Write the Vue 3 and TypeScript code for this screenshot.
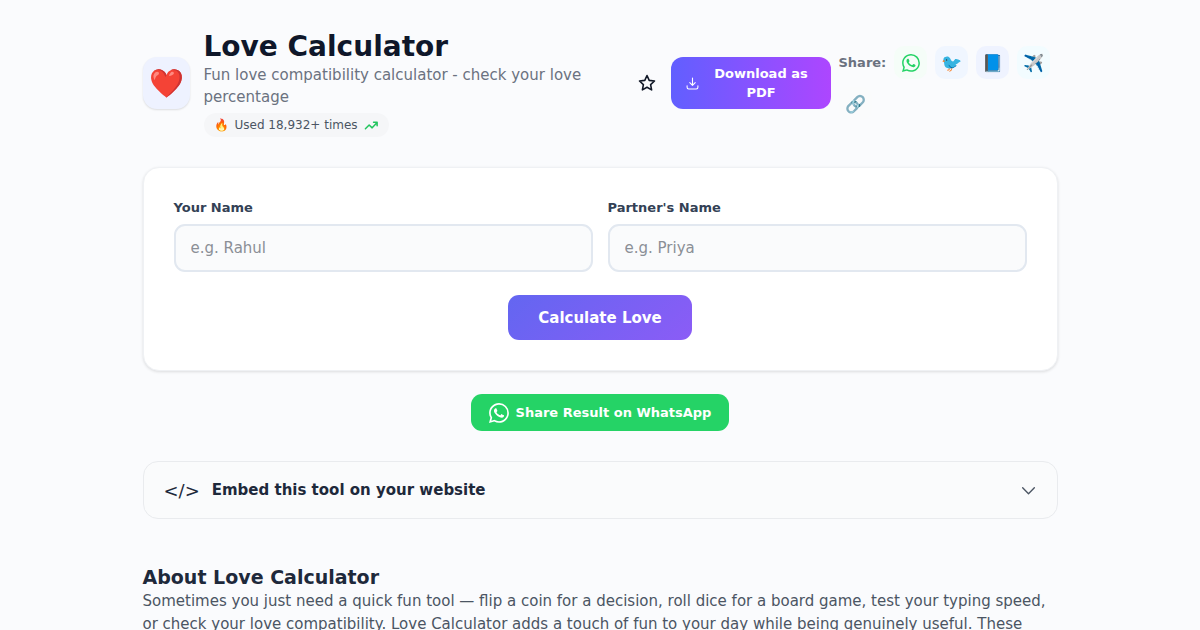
<script setup lang="ts">
import { ref } from 'vue'

interface ShareTarget {
  name: string
  glyph: string
  tone: string
}

const yourName = ref('')
const partnerName = ref('')

const shareTargets: ShareTarget[] = [
  { name: 'Twitter', glyph: '🐦', tone: 'sky' },
  { name: 'Facebook', glyph: '📘', tone: 'indigo' },
  { name: 'Telegram', glyph: '✈️', tone: 'cyan' },
  { name: 'Copy link', glyph: '🔗', tone: 'plain' },
]
</script>

<template>
  <main class="page">
    <header class="tool-header">
      <div class="tool-icon">❤️</div>
      <div class="intro">
        <h1>Love Calculator</h1>
        <p class="tagline">Fun love compatibility calculator - check your love percentage</p>
        <div class="usage">
          <span class="fire">🔥</span>
          <span>Used 18,932+ times</span>
          <svg class="trend" viewBox="0 0 16 16" fill="none" stroke="currentColor" stroke-width="1.6" stroke-linecap="round" stroke-linejoin="round">
            <path d="M1.500 11.500L5.500 7.500l3.200 3 5.300-5.800M10.200 4.500H14v3.800" />
          </svg>
        </div>
      </div>
      <button class="favorite" type="button" aria-label="Add to favorites">
        <svg viewBox="0 0 20 20" fill="none" stroke="currentColor" stroke-width="1.6" stroke-linejoin="round">
          <path d="M10 2.500l2.200 4.900 5.300.6-3.900 3.600 1 5.300L10 14.300l-4.600 2.600 1-5.300L2.500 8l5.300-.6z" />
        </svg>
      </button>
      <button class="download" type="button">
        <svg viewBox="0 0 12 12" fill="none" stroke="currentColor" stroke-width="1" stroke-linecap="round" stroke-linejoin="round">
          <path d="M6 1v6.500M3.500 5.200L6 7.700l2.500-2.500M1 8v1.500Q1 11 2.500 11h7Q11 11 11 9.500V8" />
        </svg>
        <span>Download as PDF</span>
      </button>
      <div class="share">
        <span class="share-label">Share:</span>
        <a class="share-link green" href="#whatsapp" aria-label="WhatsApp">
          <svg viewBox="0 0 16 16" fill="currentColor">
            <path d="M13.601 2.326A7.854 7.854 0 0 0 7.994 0C3.627 0 .068 3.558.064 7.926c0 1.399.366 2.760 1.057 3.965L0 16l4.204-1.102a7.933 7.933 0 0 0 3.790.965h.004c4.368 0 7.926-3.558 7.930-7.930A7.898 7.898 0 0 0 13.600 2.326zM7.994 14.521a6.573 6.573 0 0 1-3.356-.920l-.240-.144-2.494.654.666-2.433-.156-.251a6.560 6.560 0 0 1-1.007-3.505c0-3.626 2.957-6.584 6.591-6.584a6.560 6.560 0 0 1 4.660 1.931 6.557 6.557 0 0 1 1.928 4.660c-.004 3.639-2.961 6.592-6.592 6.592zM11.609 9.584c-.197-.099-1.170-.578-1.353-.646-.182-.065-.315-.099-.445.099-.133.197-.513.646-.627.775-.114.133-.232.148-.430.050-.197-.100-.836-.308-1.592-.985-.590-.525-.985-1.175-1.103-1.372-.114-.198-.011-.304.088-.403.087-.088.197-.232.296-.346.100-.114.133-.198.198-.330.065-.134.034-.248-.015-.347-.050-.099-.445-1.076-.612-1.470-.160-.389-.323-.335-.445-.340-.114-.007-.247-.007-.380-.007a.729.729 0 0 0-.529.247c-.182.198-.691.677-.691 1.654 0 .977.710 1.916.810 2.049.098.133 1.394 2.132 3.383 2.992.470.205.840.326 1.129.418.475.152.904.129 1.246.080.380-.058 1.171-.480 1.338-.943.164-.464.164-.860.114-.943-.049-.084-.182-.133-.380-.232z" />
          </svg>
        </a>
        <a v-for="target in shareTargets" :key="target.name" class="share-link" :class="target.tone" href="#share" :aria-label="target.name">{{ target.glyph }}</a>
      </div>
    </header>

    <form class="card" @submit.prevent>
      <div class="fields">
        <div class="field">
          <label for="your-name">Your Name</label>
          <input id="your-name" v-model="yourName" type="text" placeholder="e.g. Rahul" />
        </div>
        <div class="field">
          <label for="partner-name">Partner's Name</label>
          <input id="partner-name" v-model="partnerName" type="text" placeholder="e.g. Priya" />
        </div>
      </div>
      <button class="calculate" type="submit">Calculate Love</button>
    </form>

    <a class="whatsapp" href="#whatsapp">
      <svg viewBox="0 0 16 16" fill="currentColor">
        <path d="M13.601 2.326A7.854 7.854 0 0 0 7.994 0C3.627 0 .068 3.558.064 7.926c0 1.399.366 2.760 1.057 3.965L0 16l4.204-1.102a7.933 7.933 0 0 0 3.790.965h.004c4.368 0 7.926-3.558 7.930-7.930A7.898 7.898 0 0 0 13.600 2.326zM7.994 14.521a6.573 6.573 0 0 1-3.356-.920l-.240-.144-2.494.654.666-2.433-.156-.251a6.560 6.560 0 0 1-1.007-3.505c0-3.626 2.957-6.584 6.591-6.584a6.560 6.560 0 0 1 4.660 1.931 6.557 6.557 0 0 1 1.928 4.660c-.004 3.639-2.961 6.592-6.592 6.592zM11.609 9.584c-.197-.099-1.170-.578-1.353-.646-.182-.065-.315-.099-.445.099-.133.197-.513.646-.627.775-.114.133-.232.148-.430.050-.197-.100-.836-.308-1.592-.985-.590-.525-.985-1.175-1.103-1.372-.114-.198-.011-.304.088-.403.087-.088.197-.232.296-.346.100-.114.133-.198.198-.330.065-.134.034-.248-.015-.347-.050-.099-.445-1.076-.612-1.470-.160-.389-.323-.335-.445-.340-.114-.007-.247-.007-.380-.007a.729.729 0 0 0-.529.247c-.182.198-.691.677-.691 1.654 0 .977.710 1.916.810 2.049.098.133 1.394 2.132 3.383 2.992.470.205.840.326 1.129.418.475.152.904.129 1.246.080.380-.058 1.171-.480 1.338-.943.164-.464.164-.860.114-.943-.049-.084-.182-.133-.380-.232z" />
      </svg>
      <span>Share Result on WhatsApp</span>
    </a>

    <button class="embed" type="button" aria-expanded="false">
      <span class="code">&lt;/&gt;</span>
      <span class="embed-title">Embed this tool on your website</span>
      <svg viewBox="0 0 16 16" fill="none" stroke="currentColor" stroke-width="1.3" stroke-linecap="round" stroke-linejoin="round">
        <path d="M2.500 5.500L8 11l5.500-5.500" />
      </svg>
    </button>

    <section class="about">
      <h2>About Love Calculator</h2>
      <p>
        Sometimes you just need a quick fun tool — flip a coin for a decision, roll dice for a board game, test your
        typing speed, or check your love compatibility. Love Calculator adds a touch of fun to your day while being
        genuinely useful. These
      </p>
    </section>
  </main>
</template>

<style>
body {
  margin: 0;
  background: #fafbfd;
}
</style>

<style scoped>
.page {
  box-sizing: border-box;
  max-width: 947px;
  margin: 0 auto;
  padding: 29px 16px 0;
  font-family: "DejaVu Sans", sans-serif;
  font-size: 15px;
  color: #1e293b;
}
.page *,
.page *::before {
  box-sizing: border-box;
}
button,
input {
  font-family: inherit;
}
h1,
h2,
p {
  margin: 0;
}
a {
  text-decoration: none;
}
svg {
  display: block;
  flex: none;
}
.tool-header {
  display: flex;
  align-items: center;
}
.tool-icon {
  display: flex;
  align-items: center;
  justify-content: center;
  flex: none;
  width: 47px;
  height: 52px;
  margin-right: 14px;
  border-radius: 14px;
  background: #eef2ff;
  box-shadow: 0 1px 2px rgb(0 0 0 / 12%);
  font-size: 28px;
}
.intro {
  flex: 1;
  min-width: 0;
}
h1 {
  font-size: 28px;
  line-height: 35px;
  color: #0f172a;
}
.tagline {
  line-height: 22px;
  color: #6b7280;
}
.usage {
  display: flex;
  align-items: center;
  gap: 6px;
  width: fit-content;
  height: 24px;
  margin-top: 5px;
  padding: 0 10px;
  border-radius: 12px;
  background: #f5f6f8;
  font-size: 12px;
  color: #4b5563;
}
.trend {
  width: 15px;
  height: 15px;
  color: #22c55e;
}
.favorite {
  flex: none;
  margin: 0 14px 0 24px;
  padding: 0;
  border: 0;
  background: none;
  color: #111827;
}
.favorite svg {
  width: 20px;
  height: 20px;
}
.download {
  display: flex;
  align-items: center;
  gap: 8px;
  flex: none;
  width: 160px;
  margin-right: 8px;
  padding: 7px 15px;
  border: 0;
  border-radius: 12px;
  background: linear-gradient(90deg, #615fff, #ad46ff);
  font-size: 13px;
  font-weight: 700;
  line-height: 19px;
  text-align: center;
  color: #fff;
}
.download span {
  flex: 1;
}
.download svg {
  width: 13px;
  height: 13px;
}
.share {
  display: flex;
  flex-wrap: wrap;
  align-items: center;
  gap: 8px;
  flex: none;
  width: 219px;
}
.share-label {
  font-size: 13px;
  font-weight: 700;
  color: #6b7280;
}
.share-link {
  display: flex;
  align-items: center;
  justify-content: center;
  width: 33px;
  height: 33px;
  border-radius: 10px;
  font-size: 17px;
}
.share-link svg {
  width: 18px;
  height: 18px;
}
.green {
  background: #f5fdf8;
  color: #25d366;
}
.sky {
  background: #f0f6ff;
}
.indigo {
  background: #eff3ff;
}
.cyan {
  background: #f2fcff;
}
.plain {
  background: #fafbfc;
}
.card {
  margin-top: 30px;
  padding: 30px;
  border: 1px solid #eff1f4;
  border-radius: 16px;
  background: #fff;
  box-shadow: 0 1px 3px rgb(0 0 0 / 12%);
}
.fields {
  display: grid;
  grid-template-columns: 1fr 1fr;
  gap: 15px;
}
.field {
  display: flex;
  flex-direction: column;
  gap: 7px;
}
label {
  font-size: 13px;
  font-weight: 700;
  line-height: 19px;
  color: #334155;
}
input {
  width: 100%;
  height: 48px;
  padding: 0 15px;
  border: 2px solid #e2e8f0;
  border-radius: 11px;
  background: #fafbfc;
  font-size: 15px;
  color: #1e293b;
}
input::placeholder {
  color: #8b8f96;
}
.calculate {
  display: block;
  height: 45px;
  margin: 23px auto 0;
  padding: 0 30px;
  border: 0;
  border-radius: 11px;
  background: linear-gradient(135deg, #6366f1, #8b5cf6);
  font-size: 15px;
  font-weight: 700;
  color: #fff;
}
.whatsapp {
  display: flex;
  align-items: center;
  gap: 7px;
  width: fit-content;
  height: 37px;
  margin: 23px auto 0;
  padding: 0 18px;
  border-radius: 11px;
  background: #25d366;
  font-size: 13px;
  font-weight: 700;
  color: #fff;
}
.whatsapp svg {
  width: 20px;
  height: 20px;
}
.embed {
  display: flex;
  align-items: center;
  gap: 12px;
  width: 100%;
  height: 58px;
  margin-top: 30px;
  padding: 0 20px;
  border: 1px solid #e9ebee;
  border-radius: 15px;
  background: #fafbfc;
  text-align: left;
  color: #1e293b;
}
.code {
  font-size: 18px;
}
.embed-title {
  flex: 1;
  font-size: 15px;
  font-weight: 700;
}
.embed svg {
  width: 17px;
  height: 17px;
  color: #4b5563;
}
.about {
  margin-top: 46px;
}
h2 {
  font-size: 19px;
  line-height: 25px;
}
.about p {
  font-size: 15px;
  line-height: 23px;
  color: #4b5563;
}
</style>
